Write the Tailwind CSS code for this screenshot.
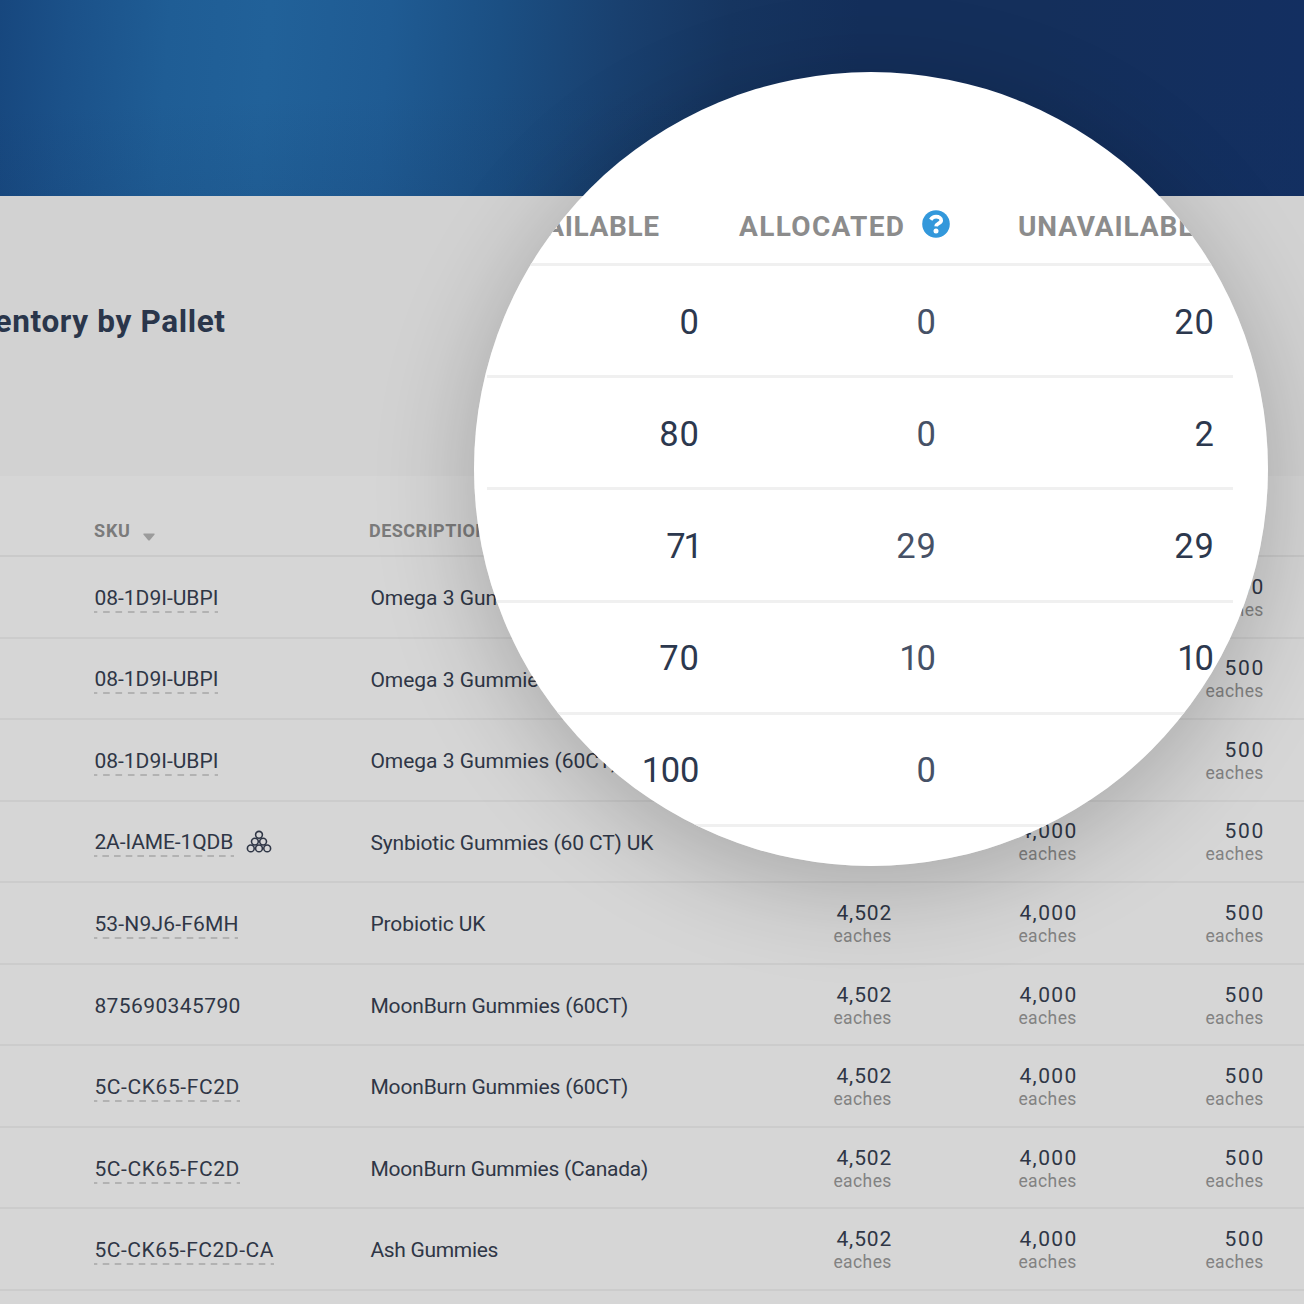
<!DOCTYPE html>
<html lang="en">
<head>
<meta charset="utf-8">
<title>Inventory by Pallet</title>
<script src="https://cdn.jsdelivr.net/npm/@tailwindcss/browser@4"></script>
</head>
<body class="relative h-[1304px] w-[1304px] overflow-hidden bg-[#d6d6d6] font-[Roboto,sans-serif] text-[21px] text-[#2f3646]">
  <header class="h-[196px] bg-[linear-gradient(178deg,transparent_45%,rgba(18,50,95,0.14)),linear-gradient(94deg,#17477e_0px,#1b5189_70px,#1f5d95_170px,#216199_270px,#1f5b93_390px,#1b4f83_500px,#19406f_620px,#163560_730px,#142f5b_860px,#142f5b_1040px,#132f61_1304px)]"></header>

  <section class="flex h-[280px] w-full bg-[#d2d2d2] pt-[105px]">
    <h1 class="flex h-[42px] w-[225px] items-center justify-end whitespace-nowrap text-[31.5px] font-bold text-[#2a364b]"><span class="inline-block" data-w="275">Inventory by Pallet</span></h1>
  </section>

  <main>
    <div class="flex h-[81px] items-center border-b-2 border-[#cacaca] pt-[30px] pl-[94px] text-[18px] font-bold text-[#7b7b7b]">
      <div class="flex w-[275px] items-center gap-[13px]">
        <span class="inline-block" data-w="36">SKU</span>
        <svg class="mt-[13px] h-[8px] w-[12px]" viewBox="0 0 12 8"><path d="M1 .5h10q1.200 .3.4 1.300L7 7q-1 1-2 0L.6 1.800Q-.2.8 1 .5Z" fill="#9b9b9b"/></svg>
      </div>
      <span class="inline-block" data-w="119">DESCRIPTION</span>
    </div>
    <div id="rows"></div>
  </main>

  <div class="absolute top-[72px] left-[474px] h-[794px] w-[794px] rounded-full shadow-[0_20px_100px_rgba(0,0,0,0.22)]">
    <div class="h-full w-full overflow-hidden rounded-full bg-white pl-[13px]">
      <div class="flex h-[194px] w-[746px] items-end border-b-[3px] border-[#f0f0f0] pb-[19px] text-[28px] leading-[34px] font-bold whitespace-nowrap text-[#8c8c8c]">
        <div class="flex w-[172px] justify-end"><span class="inline-block" data-w="150">AVAILABLE</span></div>
        <div class="flex w-[291px] items-center justify-end gap-[18px]">
          <span class="inline-block" data-w="165">ALLOCATED</span>
          <svg class="-mt-[7px] h-7 w-7" viewBox="0 0 28 28"><circle cx="14" cy="14" r="13.800" fill="#3398db"/><path d="M8.700 9.700C9.900 7.700 11.700 6.700 14.100 6.700C17 6.700 19.200 8.100 19.200 10.500C19.200 13.600 14.200 13.300 14.100 16.400" fill="none" stroke="#fff" stroke-width="3.700"/><circle cx="14" cy="20.900" r="2.500" fill="#fff"/></svg>
        </div>
        <div class="pl-[68px]"><span class="inline-block" data-w="192">UNAVAILABLE</span></div>
      </div>
      <div id="zoomed" class="w-[746px]"></div>
    </div>
  </div>

<script>
const items = [
  ['08-1D9I-UBPI', 124, 124, 'Omega 3 Gummies (60CT)', 248],
  ['08-1D9I-UBPI', 124, 124, 'Omega 3 Gummies (60CT)', 248],
  ['08-1D9I-UBPI', 124, 124, 'Omega 3 Gummies (60CT)', 248],
  ['2A-IAME-1QDB', 139, 140, 'Synbiotic Gummies (60 CT) UK', 283],
  ['53-N9J6-F6MH', 144, 144, 'Probiotic UK', 115],
  ['875690345790', 146, 0, 'MoonBurn Gummies (60CT)', 258],
  ['5C-CK65-FC2D', 145, 146, 'MoonBurn Gummies (60CT)', 258],
  ['5C-CK65-FC2D', 145, 146, 'MoonBurn Gummies (Canada)', 278],
  ['5C-CK65-FC2D-CA', 179, 180, 'Ash Gummies', 128],
];
const bundle = `<svg class="ml-[12.500px] h-6 w-[26px]" viewBox="0 0 26 24" fill="none" stroke="#2f3646" stroke-width="1.600"><circle cx="13" cy="4.800" r="3.400"/><circle cx="8.900" cy="11.600" r="3.400"/><circle cx="17.100" cy="11.600" r="3.400"/><circle cx="4.800" cy="18.400" r="3.400"/><circle cx="13" cy="18.400" r="3.400"/><circle cx="21.200" cy="18.400" r="3.400"/></svg>`;
const fitted = (text, w) => `<span class="inline-block" data-w="${w}">${text}</span>`;
const qty = (value, w, box) => `<div class="flex ${box} flex-col items-end"><div class="leading-[24px]">${fitted(value, w)}</div><div class="text-[17.500px] leading-[22px] text-[#828282]">${fitted('eaches', 58)}</div></div>`;
document.getElementById('rows').innerHTML = items.map(([sku, skuW, line, desc, descW]) => {
  const period = line / Math.round(line / 12.1);
  const rule = line ? `<svg class="absolute top-[27px] left-0 h-[2px]" width="${line}" height="2"><line x1="0" y1="1" x2="${line}" y2="1" stroke="#a6a6a6" stroke-width="1.600" stroke-dasharray="6.600 ${period - 6.6}" stroke-dashoffset="3.300"/></svg>` : '';
  return `<div class="flex h-[81.560px] items-center border-b-2 border-[#cccccc] pt-[2px] pl-[94.400px] whitespace-nowrap">
    <div class="flex w-[276px] items-center"><div class="relative leading-[28px]">${fitted(sku, skuW)}${rule}</div>${sku[0] === '2' ? bundle : ''}</div>
    <div class="w-[371px] pt-[2px]">${fitted(desc, descW)}</div>
    ${qty('4,502', 55, 'w-[150px]')}${qty('4,000', 57, 'w-[185px]')}${qty('500', 39, 'w-[187px]')}
  </div>`;
}).join('');

// Numbers containing a narrow "1" are set tighter than the rest.
const number = (text, box) => {
  if (text === '71') return `<div class="${box} text-right"><span class="-mr-[1px] tracking-[-2px]">71</span></div>`;
  if (text === '10') return `<div class="${box} text-right"><span class="mr-[3px] tracking-[-2px]">10</span></div>`;
  if (text === '100') return `<div class="${box} text-right"><span class="mr-[1px] tracking-[-0.300px]">100</span></div>`;
  return `<div class="${box} text-right">${text}</div>`;
};
const zoomRows = [['0', '0', '20'], ['80', '0', '2'], ['71', '29', '29'], ['70', '10', '10'], ['100', '0', ''], ['', '', '']];
document.getElementById('zoomed').innerHTML = zoomRows.map(([a, b, c]) => `<div class="flex h-[112.200px] items-center border-b-[3px] border-[#f0f0f0] pt-[4px] text-[34.500px] tracking-[1px] text-[#2c384e]">
  ${number(a, 'w-[213px]')}${number(b, 'w-[237px] text-[#465166]')}${number(c, 'w-[278px]')}
</div>`).join('');

window.addEventListener('load', async () => {
  await document.fonts.ready;
  document.querySelectorAll('[data-w]').forEach(el => {
    const gap = (Number(el.dataset.w) - el.getBoundingClientRect().width) / (el.textContent.length - 1);
    el.style.letterSpacing = gap + 'px';
    el.style.marginRight = -gap + 'px';
  });
});
</script>
</body>
</html>
